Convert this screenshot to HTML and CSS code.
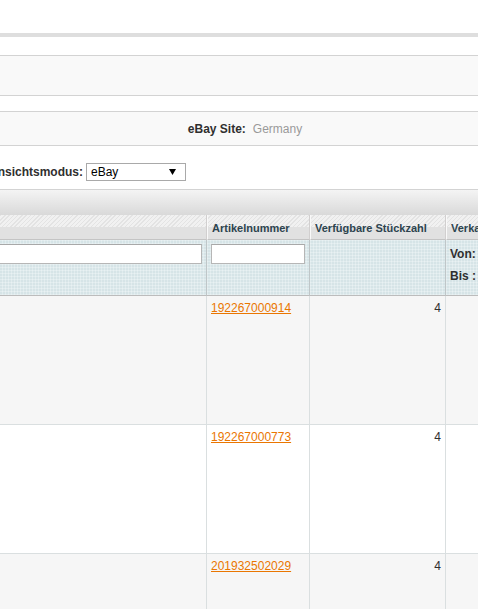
FILE: index.html
```html
<!DOCTYPE html>
<html lang="de">
<head>
<meta charset="utf-8">
<title>eBay Listings</title>
<link rel="stylesheet" href="styles.css">
</head>
<body>
<div class="page">
  <div class="top-space"></div>
  <div class="stripe"></div>
  <div class="gap-a"></div>
  <div class="panel panel-empty"></div>
  <div class="gap-b"></div>
  <div class="panel panel-site"><span class="site-label">eBay Site:</span><span class="site-value">Germany</span></div>
  <div class="mode-row">
    <label class="mode-label" for="mode">Ansichtsmodus:</label>
    <span class="sel-wrap">
      <select id="mode" class="mode-select"><option>eBay</option></select>
      <svg class="sel-arrow" width="7" height="6" viewBox="0 0 7 6"><path d="M0 0H7L3.5 6Z" fill="#000"/></svg>
    </span>
  </div>
  <div class="grid-bar"></div>
  <div class="grid-wrap">
    <table class="grid">
      <colgroup>
        <col class="c1"><col class="c2"><col class="c3"><col class="c4">
      </colgroup>
      <thead>
        <tr class="headings">
          <th class="first"><span class="nobr"></span></th>
          <th><span class="nobr">Artikelnummer</span></th>
          <th><span class="nobr">Verfügbare Stückzahl</span></th>
          <th><span class="nobr">Verkaufspreis</span></th>
        </tr>
        <tr class="filter">
          <th><input class="f-input" type="text"></th>
          <th><input class="f-input" type="text"></th>
          <th></th>
          <th>
            <div class="range-line">Von:</div>
            <div class="range-line">Bis :</div>
          </th>
        </tr>
      </thead>
      <tbody>
        <tr class="odd">
          <td></td>
          <td><a href="#">192267000914</a></td>
          <td class="num">4</td>
          <td></td>
        </tr>
        <tr class="even">
          <td></td>
          <td><a href="#">192267000773</a></td>
          <td class="num">4</td>
          <td></td>
        </tr>
        <tr class="odd">
          <td></td>
          <td><a href="#">201932502029</a></td>
          <td class="num">4</td>
          <td></td>
        </tr>
      </tbody>
    </table>
  </div>
</div>
</body>
</html>
```
FILE: styles.css
```css
html, body {
  margin: 0;
  padding: 0;
  background: #fff;
  overflow: hidden;
}
body {
  font-family: "Liberation Sans", Arial, sans-serif;
  font-size: 12px;
  color: #2f2f2f;
}
.page {
  width: 478px;
  height: 609px;
  overflow: hidden;
}
.top-space { height: 33px; }
.stripe { height: 4px; background: #dedede; }
.gap-a { height: 18px; }
.panel {
  background: #f9f9f9;
  border-top: 1px solid #d3d3d3;
  border-bottom: 1px solid #d3d3d3;
}
.panel-empty { height: 39px; }
.gap-b { height: 15px; }
.panel-site {
  height: 33px;
  display: flex;
  align-items: center;
  justify-content: center;
  padding-left: 12px;
}
.site-label { font-weight: bold; color: #2f2f2f; margin-right: 7px; }
.site-value { color: #999; }

.mode-row {
  height: 43px;
  display: flex;
  align-items: flex-start;
  padding-top: 17px;
  box-sizing: border-box;
  margin-left: -11px;
}
.mode-label {
  font-weight: bold;
  color: #2f2f2f;
  line-height: 18px;
  margin-right: 3px;
}
.sel-wrap {
  position: relative;
  display: block;
  width: 100px;
  height: 18px;
}
.mode-select {
  appearance: none;
  -webkit-appearance: none;
  width: 100px;
  height: 18px;
  margin: 0;
  box-sizing: border-box;
  border: 1px solid #a9a9a9;
  border-radius: 0;
  background: #fff;
  font-family: "Liberation Sans", Arial, sans-serif;
  font-size: 12px;
  color: #000;
  padding: 0 0 0 4px;
  line-height: 16px;
}
.sel-arrow {
  position: absolute;
  right: 10px;
  top: 6px;
  pointer-events: none;
}

.grid-bar {
  height: 25px;
  border-top: 1px solid #d3d3d3;
  background: linear-gradient(#f4f4f4, #d9d9d9);
}

.grid-wrap {
  width: 478px;
  overflow: hidden;
}
.grid {
  table-layout: fixed;
  border-collapse: separate;
  border-spacing: 0;
  width: 746px;
  margin-left: -100px;
}
.c1 { width: 307px; }
.c2 { width: 103px; }
.c3 { width: 136px; }
.c4 { width: 200px; }

.grid th, .grid td {
  padding: 0;
  text-align: left;
  vertical-align: top;
  box-sizing: border-box;
}

.headings th {
  height: 25px;
  border-left: 1px solid #f9f9f9;
  border-right: 1px solid #d1cfcf;
  border-bottom: 1px solid #c4c4c4;
  background:
    linear-gradient(to bottom, transparent 12px, #e1e1e1 12px),
    repeating-linear-gradient(135deg, #f1f1f1 0 2px, #e3e3e3 2px 3px);
  font-size: 11px;
  font-weight: bold;
  color: #2d444f;
  vertical-align: middle;
}
.headings th.first { border-left: 0; }
.headings .nobr {
  display: block;
  padding: 1px 4px 0 4px;
  white-space: nowrap;
  line-height: 14px;
}

.filter th {
  height: 56px;
  padding: 4px 4px 0 4px;
  border-right: 1px solid #bfc6c8;
  border-bottom: 1px solid #bcbcbc;
  background-color: #d6e4e7;
  background-image:
    linear-gradient(90deg, rgba(255,255,255,0.28) 1px, transparent 1px),
    linear-gradient(rgba(255,255,255,0.28) 1px, transparent 1px);
  background-size: 3px 3px;
}
.f-input {
  display: block;
  width: 100%;
  height: 20px;
  margin: 0;
  box-sizing: border-box;
  border: 1px solid #b6b6b6;
  border-top-color: #a8a8a8;
  background: #fff;
  font-family: "Liberation Sans", Arial, sans-serif;
  font-size: 12px;
}
.range-line {
  font-weight: bold;
  color: #2f2f2f;
  line-height: 18px;
  padding-top: 1px;
  margin-bottom: 3px;
  white-space: nowrap;
}

.grid td {
  height: 129px;
  padding: 5px 4px 0 4px;
  border-right: 1px solid #dadfe0;
  border-bottom: 1px solid #dadfe0;
  line-height: 14px;
}
.grid tr.odd td { background: #f6f6f6; }
.grid tr.even td { background: #fff; }
.grid td.num { text-align: right; }
.grid a { color: #ea7601; text-decoration: underline; }
```
